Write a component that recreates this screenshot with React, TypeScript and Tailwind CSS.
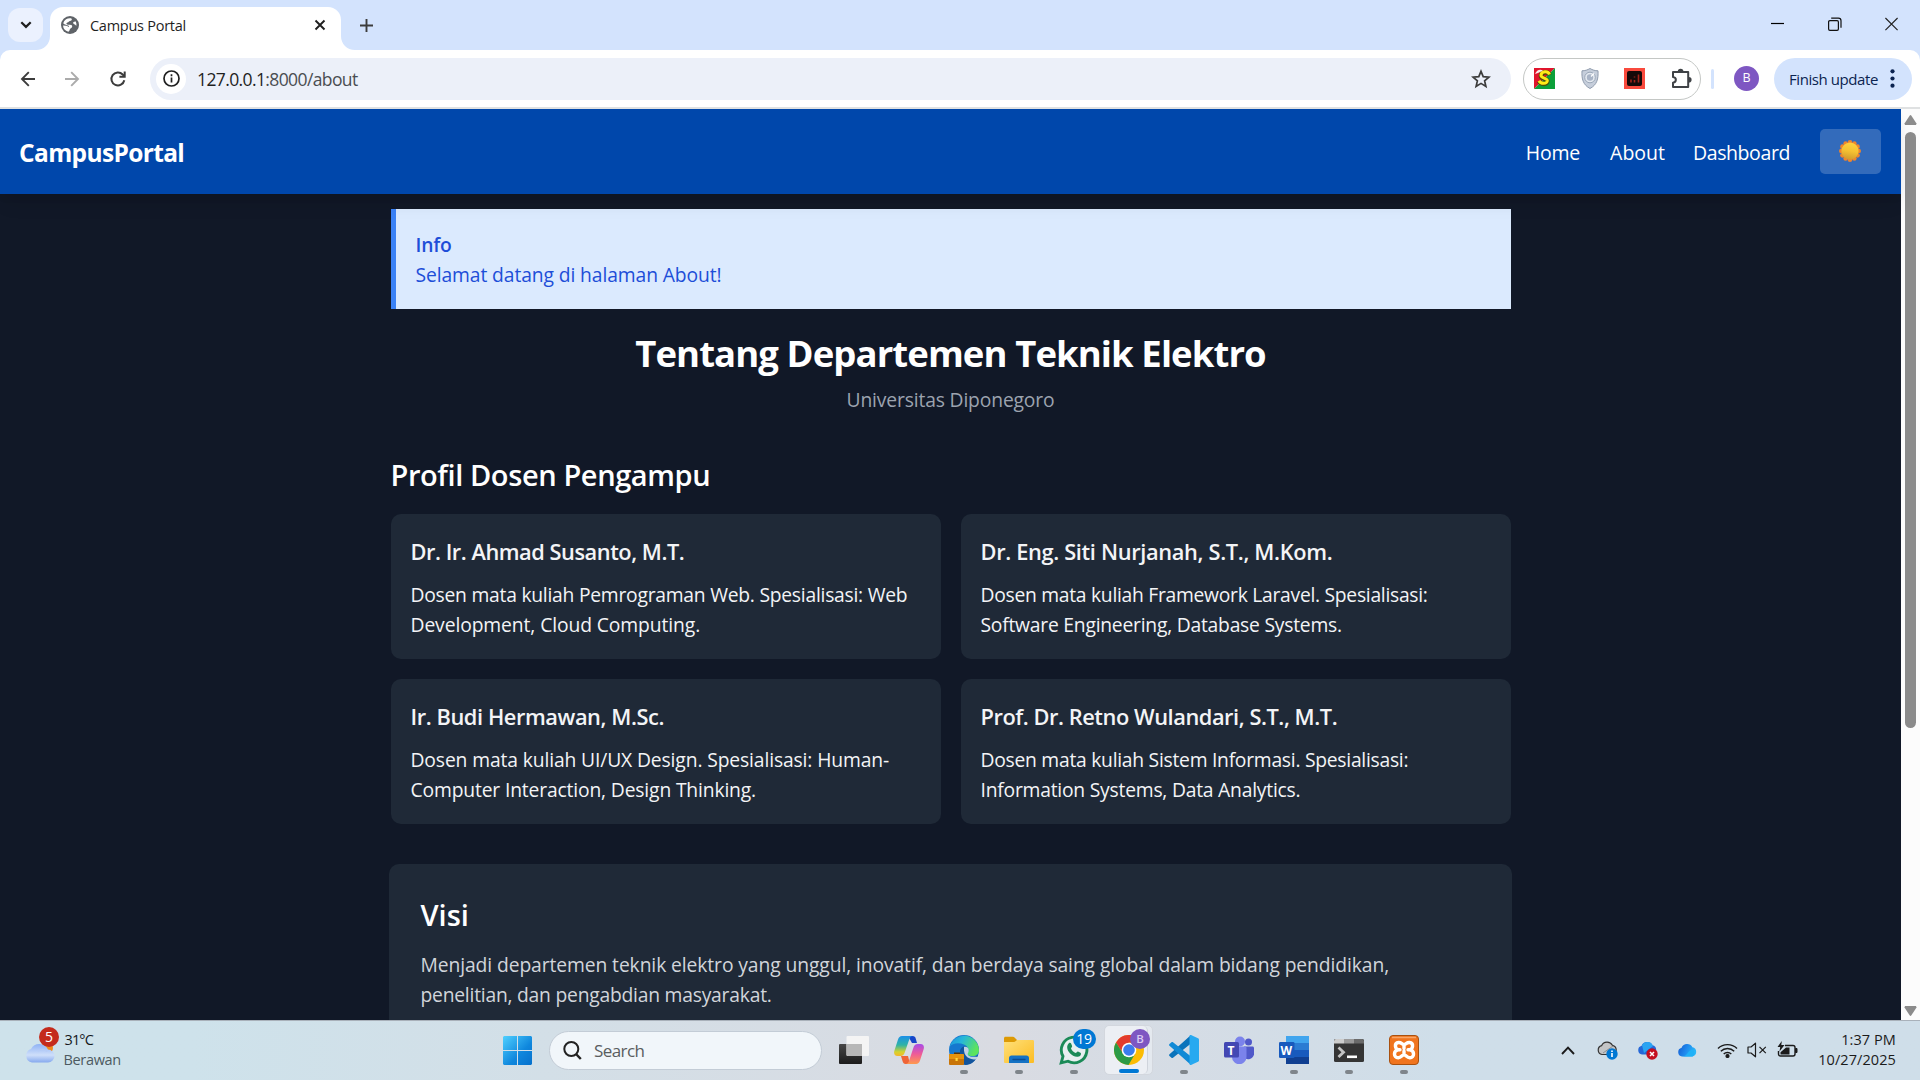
import type { ReactNode } from "react";

const lecturers = [
  { name: "Dr. Ir. Ahmad Susanto, M.T.", nameTrack: "tracking-[-0.0215em]", first: "Dosen mata kuliah Pemrograman Web. Spesialisasi: Web", firstTrack: "tracking-[-0.0128em]", second: "Development, Cloud Computing.", secondTrack: "tracking-[-0.005em]" },
  { name: "Dr. Eng. Siti Nurjanah, S.T., M.Kom.", nameTrack: "tracking-[-0.0155em]", first: "Dosen mata kuliah Framework Laravel. Spesialisasi:", firstTrack: "tracking-[-0.0145em]", second: "Software Engineering, Database Systems.", secondTrack: "tracking-[-0.012em]" },
  { name: "Ir. Budi Hermawan, M.Sc.", nameTrack: "tracking-[-0.0195em]", first: "Dosen mata kuliah UI/UX Design. Spesialisasi: Human-", firstTrack: "tracking-[-0.0066em]", second: "Computer Interaction, Design Thinking.", secondTrack: "tracking-[-0.008em]" },
  { name: "Prof. Dr. Retno Wulandari, S.T., M.T.", nameTrack: "tracking-[-0.0203em]", first: "Dosen mata kuliah Sistem Informasi. Spesialisasi:", firstTrack: "tracking-[-0.0136em]", second: "Information Systems, Data Analytics.", secondTrack: "tracking-[-0.0115em]" },
];

function TabStrip() {
  return (
    <div className="flex h-[50px] bg-[#d3e3fd]">
      <div className="ml-2 mt-2 flex h-[34px] w-[35px] items-center justify-center rounded-[12px] bg-[#ebf1fe]">
        <svg width="12" height="8" viewBox="0 0 12 8" fill="none" stroke="#1f1f1f" strokeWidth="2.2"><path d="M1.3 1.2 6 5.9l4.7-4.7" /></svg>
      </div>
      <svg className="ml-[-7px] self-end" width="14" height="14" viewBox="0 0 14 14"><path d="M14 0v14H0C8 14 14 8 14 0Z" fill="#fff" /></svg>
      <div className="mt-[7px] flex h-[43px] w-[291px] items-center rounded-t-[13px] bg-white pb-[7px] pl-[11px] pr-[15px]">
        <svg width="18" height="18" viewBox="0 0 18 18">
          <circle cx="9" cy="9" r="9" fill="#5f6368" />
          <path d="M9.8 2.200c1.900.9.9 2.600-.7 2.700-1.600.1-1.200 1.500-2.700 1.700-1.500.2-1.300 2 .4 2.100 2 .1 4.600-.2 4.400 1.700-.2 1.700-1.600 1.600-2.300 2.800-.5.9-.4 2.100-1.600 2.600A7 7 0 0 1 2 9.600l3.200.2c1.300.1 1.500 1 2.800 1.200l-.3-1.300-4.300-1.400-1.200-1A7 7 0 0 1 9.800 2.200Z" fill="#fff" />
          <path d="M14.800 5.600c-1.600-.3-3.200.7-2.500 2 .6 1 2.300.7 2.900 2.300a7 7 0 0 0-.4-4.300Z" fill="#fff" />
        </svg>
        <span className="ml-[11px] mt-[2px] text-[14.5px] tracking-[-0.018em] text-[#1f1f1f]">Campus Portal</span>
        <svg className="ml-auto" width="12" height="12" viewBox="0 0 12 12" stroke="#1f1f1f" strokeWidth="1.9"><path d="m1.500 1.500 9 9m0-9-9 9" /></svg>
      </div>
      <svg className="self-end" width="14" height="14" viewBox="0 0 14 14"><path d="M0 0v14h14C6 14 0 8 0 0Z" fill="#fff" /></svg>
      <svg className="ml-[5px] mt-[18.5px]" width="13" height="13" viewBox="0 0 13 13" stroke="#3c3c3c" strokeWidth="1.9"><path d="M6.500 0v13M0 6.500h13" /></svg>
      <div className="ml-auto mr-[22px] mt-[17px] flex h-[14px] gap-[43.5px]">
        <svg width="13" height="14" viewBox="0 0 13 14" stroke="#000" strokeWidth="1.2"><path d="M0 6.500h13" /></svg>
        <svg width="14" height="14" viewBox="0 0 14 14" fill="none" stroke="#111" strokeWidth="1.2"><rect x=".6" y="3.600" width="9.800" height="9.800" rx="1.300" /><path d="M3.200 1.200h7.200a2.600 2.600 0 0 1 2.600 2.600v7" /></svg>
        <svg width="13" height="14" viewBox="0 0 13 14" stroke="#222" strokeWidth="1.2"><path d="m.400 1 12.200 12.200m0-12.200L.400 13.200" /></svg>
      </div>
    </div>
  );
}

function Toolbar() {
  return (
    <div className="h-[59px] bg-[#d3e3fd]">
      <div className="flex h-[59px] items-center rounded-t-[10px] border-b-2 border-[#dfe1e2] bg-white">
        <svg className="ml-[20px]" width="16" height="16" viewBox="0 0 16 16" fill="none" stroke="#3c3c3c" strokeWidth="1.9"><path d="M15 8H2m6.800-6.800L2 8l6.800 6.800" /></svg>
        <svg className="ml-[28px]" width="16" height="16" viewBox="0 0 16 16" fill="none" stroke="#ababab" strokeWidth="1.9"><path d="M1 8h13M7.200 1.200 14 8l-6.800 6.800" /></svg>
        <svg className="ml-[28.500px]" width="18" height="18" viewBox="0 0 18 18" fill="none" stroke="#3c3c3c" strokeWidth="2"><path d="M15.300 10.300A6.500 6.500 0 1 1 13.700 4.500l1.600 1.700" /><path d="M15.700 1.500v5.300h-5.300" /></svg>
        <div className="ml-[23.500px] flex h-[42px] w-[1361px] items-center rounded-full bg-[#ecf0f9] pl-[6px] pr-[20px]">
          <div className="flex size-[30px] items-center justify-center rounded-full bg-white">
            <svg width="17" height="17" viewBox="0 0 17 17" fill="none" stroke="#1f1f1f" strokeWidth="1.7"><circle cx="8.500" cy="8.500" r="7.500" /><path d="M8.500 7.500v5M8.500 4.300v1.900" /></svg>
          </div>
          <span className="ml-[11px] mt-[2px] text-[17.5px] tracking-[-0.035em] text-[#4a4d51]"><span className="text-[#1f1f1f]">127.0.0.1</span>:8000/about</span>
          <svg className="ml-auto" width="20" height="20" viewBox="0 0 20 20" fill="none" stroke="#3c3c3c" strokeWidth="1.7"><path d="m10 2.300 2.200 5.300 5.700.500-4.300 3.700 1.300 5.600-4.900-3-4.900 3 1.300-5.600-4.300-3.700 5.700-.500Z" /></svg>
        </div>
        <div className="ml-[12px] flex h-[42px] w-[178px] items-center rounded-full border border-[#c4c7c5] pl-[10px]">
          <svg width="21" height="21" viewBox="0 0 21 21"><path d="M0 0h21L0 21Z" fill="#e0142c" /><path d="M21 0v21H0Z" fill="#0ca03a" /><path d="M15.500 7C14 2.800 7.500 4 7 7.500c-.5 3.500 7 2.600 6.300 6-.8 3.300-6.500 3-8.300-.3" fill="none" stroke="#4b4d08" strokeWidth="4.600" /><path d="M15.500 6.500C14 2.300 7.500 3.500 7 7c-.5 3.500 7 2.600 6.300 6-.8 3.300-6.500 3-8.300-.3" fill="none" stroke="#ffeb16" strokeWidth="3" /><path d="M1 6C2.500 2 6 .8 9 2.500L4 5Z" fill="#f9e9e9" /></svg>
          <svg className="ml-[26px]" width="18" height="21" viewBox="0 0 18 21"><path d="M9 .500c2.500 1.500 5 2.300 8 2.300.500 8-1 14-8 17.700C2 16.800.500 10.800 1 2.800c3 0 5.500-.800 8-2.300Z" fill="#c6cedb" stroke="#8f9bad" /><circle cx="9" cy="9.500" r="5.300" fill="#e5eaf1" stroke="#9ba7b8" /><circle cx="9" cy="9.500" r="3.200" fill="#a9b4c6" /><path d="m10 8.500 3-3" stroke="#fff" strokeWidth="1.200" /></svg>
          <svg className="ml-[25px]" width="21" height="21" viewBox="0 0 21 21"><path d="M0 0h21v21H0z" fill="#f94a3d" /><rect x="3" y="3" width="15" height="15" rx="2" fill="#150909" /><path d="M7 14.500v-3m3.500 3V12m0-2.500v-1m4 6v-8" stroke="#a3231b" strokeWidth="1.600" /></svg>
          <svg className="ml-[25.500px]" width="21" height="21" viewBox="0 0 21 21" fill="none" stroke="#3f4246" strokeWidth="2"><path d="M2 4h15.200v15H2v-4.300c3.800-.500 3.800-5.300 0-5.800Z" strokeLinejoin="round" /><path d="M6.800 3.600a2.800 2.800 0 0 1 5.600 0ZM17.800 8.900a2.800 2.800 0 0 1 0 5.600Z" fill="#3f4246" stroke="none" /></svg>
        </div>
        <div className="ml-[10px] h-[20px] w-[3px] rounded-full bg-[#d3e3fd]" />
        <div className="ml-[20px] flex size-[25px] items-center justify-center rounded-full bg-[#7e57c2] text-[12.5px] font-medium text-white">B</div>
        <div className="ml-[15px] flex h-[42px] w-[138px] items-center rounded-full bg-[#d3e3fd] pl-[15px]">
          <span className="mt-px w-[91px] whitespace-nowrap text-[15px] tracking-[-0.028em] text-[#0b2350]">Finish update</span>
          <svg className="ml-[10px]" width="5" height="19" viewBox="0 0 5 19" fill="#0b2350"><circle cx="2.500" cy="2.300" r="2.100" /><circle cx="2.500" cy="9.500" r="2.100" /><circle cx="2.500" cy="16.700" r="2.100" /></svg>
        </div>
      </div>
    </div>
  );
}

function SunIcon() {
  const petals = Array.from({ length: 12 }, (_, i) => (i * Math.PI) / 6);
  return (
    <svg width="24" height="24" viewBox="0 0 24 24">
      <defs><linearGradient id="sun" x1="0.6" y1="0" x2="0.4" y2="1"><stop stopColor="#ffd33f" /><stop offset=".5" stopColor="#f5c132" /><stop offset="1" stopColor="#d09a2e" /></linearGradient></defs>
      {petals.map((a) => <circle key={a} cx={12 + 8.7 * Math.cos(a)} cy={12 + 8.7 * Math.sin(a)} r="2.3" fill="#f0852c" />)}
      <circle cx="12" cy="12" r="8.600" fill="url(#sun)" />
    </svg>
  );
}

function Page() {
  return (
    <div className="flex h-[911px] overflow-hidden bg-[#111827]">
      <div className="min-w-0 flex-1">
        <nav className="relative flex h-[85px] items-center justify-between bg-[#0047ab] px-5 text-white shadow-[0_5px_8px_-1px_rgba(0,0,0,0.04),0_12px_18px_-4px_rgba(0,0,0,0.1)]">
          <span className="ml-[-1px] mt-[3px] text-[24.5px] font-bold tracking-[-0.026em]">CampusPortal</span>
          <div className="flex items-center text-[19.5px] font-medium">
            <span className="mt-[2px] tracking-[-0.01em]">Home</span>
            <span className="ml-[30px] mt-[2px]">About</span>
            <span className="ml-[28px] mt-[2px] tracking-[-0.0205em]">Dashboard</span>
            <div className="ml-[30px] flex h-[45px] w-[61px] items-center justify-center rounded-[5px] bg-white/20 pr-[1px] pb-px"><SunIcon /></div>
          </div>
        </nav>
        <main className="mx-auto w-[1120px] pt-[15px]">
          <div className="h-[100px] border-l-5 border-[#3b82f6] bg-[#dbeafe] px-5 pt-[21px] text-[19.3px] leading-[30px] text-[#1d4ed8]">
            <p className="font-semibold tracking-[-0.01em]">Info</p>
            <p className="tracking-[-0.0055em]">Selamat datang di halaman About!</p>
          </div>
          <h1 className="mt-[21.5px] text-center text-[36.5px] font-bold leading-[45px] tracking-[-0.025em] text-white">Tentang Departemen Teknik Elektro</h1>
          <p className="mt-[9.5px] text-center text-[19.3px] leading-[30px] tracking-[-0.008em] text-[#9ca3af]">Universitas Diponegoro</p>
          <h2 className="mt-[40px] text-[29px] font-semibold leading-[40px] tracking-[-0.0135em] text-white">Profil Dosen Pengampu</h2>
          <div className="mt-[19px] grid grid-cols-2 gap-5">
            {lecturers.map((l) => (
              <div key={l.name} className="h-[145px] whitespace-nowrap rounded-[10px] bg-[#1f2937] p-5 text-[#f3f4f6]">
                <h3 className={`text-[21.8px] font-semibold leading-[35px] ${l.nameTrack}`}>{l.name}</h3>
                <p className="mt-[11px] text-[19.3px] leading-[30px]">
                  <span className={l.firstTrack}>{l.first}</span><br />
                  <span className={l.secondTrack}>{l.second}</span>
                </p>
              </div>
            ))}
          </div>
          <section className="mx-[-1.5px] mt-[39.5px] h-[200px] rounded-[10px] bg-[#1f2937] pl-[31.5px] pt-[31.5px]">
            <h2 className="text-[29px] font-semibold leading-[40px] text-white">Visi</h2>
            <p className="mt-[15px] whitespace-nowrap text-[19.3px] leading-[30px] text-[#d1d5db]">
              <span className="tracking-[-0.0051em]">Menjadi departemen teknik elektro yang unggul, inovatif, dan berdaya saing global dalam bidang pendidikan,</span><br />
              <span className="tracking-[-0.0118em]">penelitian, dan pengabdian masyarakat.</span>
            </p>
          </section>
        </main>
      </div>
      <div className="flex w-[19px] flex-col items-center bg-[#fcfcfc] pb-[4px] pt-[6px]">
        <svg width="13" height="10" viewBox="0 0 13 10" fill="#8b8b8b"><path d="M5.600.700a1.100 1.100 0 0 1 1.800 0L12.500 8.600 12 10H1L.500 8.600Z" /></svg>
        <div className="mt-[7px] h-[596px] w-[11px] rounded-full bg-[#8b8b8b]" />
        <svg className="mt-auto" width="13" height="10" viewBox="0 0 13 10" fill="#8b8b8b"><path d="M5.600 9.300a1.100 1.100 0 0 0 1.800 0L12.500 1.400 12 0H1L.500 1.400Z" /></svg>
      </div>
    </div>
  );
}

function Slot({ children, mark }: { children: ReactNode; mark?: boolean }) {
  return (
    <div className="flex w-[55px] flex-col items-center pt-[14px]">
      <div className="relative flex size-[30px] items-center justify-center">{children}</div>
      {mark && <div className="mt-[5px] h-1 w-2 rounded-full bg-[#7f858b]" />}
    </div>
  );
}

const cloudPath = "M5 13.500A4.500 4.500 0 0 1 4.600 4.700 6 6 0 0 1 15.400 4.300 4.700 4.700 0 0 1 15.500 13.500Z";

function Taskbar() {
  return (
    <div className="flex h-[60px] border-t border-[#a9b1ba] bg-linear-to-r from-[#cee2eb] via-[#d9dbe2] to-[#cfdee9] from-10% via-52% to-75%">
      <div className="flex w-[503px] pl-[24px] pt-[6px]">
        <div className="relative h-[40px] w-[38px]">
          <svg className="mt-[15px]" width="32" height="22" viewBox="0 0 32 22"><defs><linearGradient id="wc" x2="0" y2="1"><stop stopColor="#8fb2f5" /><stop offset=".6" stopColor="#cfdffa" /><stop offset="1" stopColor="#86a9ee" /></linearGradient></defs><circle cx="23" cy="6" r="6" fill="#f28a1b" /><path d="M8 20.500a7 7 0 0 1-1-13.500A9.500 9.500 0 0 1 24 7.500a6.500 6.500 0 0 1 0 13Z" fill="url(#wc)" /><path d="M14 9c3-2 7-2 9 1" fill="none" stroke="#b8ccf6" /></svg>
          <div className="absolute left-[15px] top-0 flex size-[20px] items-center justify-center rounded-full bg-[#c42b1c] text-[14px] leading-none text-white">5</div>
        </div>
        <div className="ml-[1.5px] pt-[3px] text-[14.5px] leading-[20px]">
          <p className="ml-px tracking-[-0.06em] text-[#16191c]">31°C</p>
          <p className="tracking-[-0.023em] text-[#4d5a61]">Berawan</p>
        </div>
      </div>
      <svg className="mt-[15px]" width="29" height="29" viewBox="0 0 29 29"><defs><linearGradient id="win" x2="1" y2="1"><stop stopColor="#4fd0ff" /><stop offset=".6" stopColor="#0f87dd" /><stop offset="1" stopColor="#0670cc" /></linearGradient></defs><path d="M1 0h13v14H0V1zM15 0h13l1 1v13H15zM0 15h14v14H1l-1-1zM15 15h14v13l-1 1H15z" fill="url(#win)" /></svg>
      <div className="ml-[17px] mt-[9.500px] flex h-[39px] w-[273px] items-center rounded-full border border-[#c3ccd6] bg-[#f1f6fa] pl-[13px]">
        <svg width="19" height="19" viewBox="0 0 19 19" fill="none" stroke="#222" strokeWidth="2"><circle cx="8.300" cy="8" r="7" /><path d="m13 13 4.800 5" strokeWidth="2.500" /></svg>
        <span className="ml-[12px] mt-px text-[17px] tracking-[-0.034em] text-[#5a5d60]">Search</span>
      </div>
      <div className="ml-[4px] flex">
        <Slot><svg width="30" height="28" viewBox="0 0 30 28"><defs><linearGradient id="tv" x2="0" y2="1"><stop stopColor="#474747" /><stop offset="1" stopColor="#1b1b1b" /></linearGradient></defs><rect y="8" width="23" height="20" rx="1" fill="url(#tv)" /><rect x="7.500" width="22.500" height="20" rx="1" fill="#f4f4f4" /><path d="M7.500 8H23v12H8.500l-1-1Z" fill="#b7b7b7" /></svg></Slot>
        <Slot>
          <svg width="30" height="28" viewBox="0 0 30 28"><defs><linearGradient id="cpa" x2="0" y2="1"><stop stopColor="#1b8fe8" /><stop offset=".45" stopColor="#2fb3a6" /><stop offset=".8" stopColor="#d7d22d" /><stop offset="1" stopColor="#f5b62a" /></linearGradient><linearGradient id="cpb" x2="0" y2="1"><stop stopColor="#a84be8" /><stop offset=".5" stopColor="#ee5b98" /><stop offset="1" stopColor="#ff9a4d" /></linearGradient></defs>
            <path d="M14 0h4.500c2 0 2.800 1 3.300 2.700L23 7h-5Z" fill="#1746c9" /><path d="M8 0h11c-2 0-3 1.200-3.600 3l-4.500 13c-.8 2.500-2 4-4.500 4H3.500C.500 20-.400 17.500.300 15L4 3.500C4.700 1.200 6 0 8 0Z" fill="url(#cpa)" /><path d="M7 20h7l2 8h-4.500c-1.500 0-2.500-1-3-3Z" fill="#ef6437" /><path d="M22 28H11.500c2 0 2.800-1.200 3.500-3l4.300-13c.8-2.500 2-4 4.500-4h2.700c3 0 3.900 2.500 3.200 5L26 24.500C25.300 26.800 24 28 22 28Z" fill="url(#cpb)" /></svg>
        </Slot>
        <Slot mark>
          <svg width="30" height="30" viewBox="0 0 30 30"><defs><linearGradient id="ed" x2="1" y2=".4"><stop stopColor="#1d8fe0" /><stop offset=".45" stopColor="#27b7d8" /><stop offset="1" stopColor="#5ce45d" /></linearGradient></defs>
            <circle cx="15" cy="15" r="15" fill="#1678cf" /><path d="M.5 12A15 15 0 0 1 30 15c0 4-3 6-6 6-4 0-7-1-5-4 1.200-2 0-6-4-7.500C10 7.500 3 8 .5 12Z" fill="url(#ed)" /><path d="M11 17c0-4 3-6 5.500-5.500C20 12.500 20 16 18.500 18c-1 2 1 4 4 4 3 0 5-.7 6.500-2C27 26 22 30 16.500 30 12 28 11 22 11 17Z" fill="#12549d" /><path d="M15 12c4-1 6 3 4 6-1 2 1 3.500 4 3.800h6l-2 2.700c-6 0-13-2-12-12.500Z" fill="#dfe7ef" opacity=".85" />
            <path d="M5 19.500h6v-2H5z" fill="#5a3508" /><rect y="19" width="15" height="11" rx="1" fill="#c87408" /><path d="M0 20.500c0-1 .5-1.500 1.500-1.500h12c1 0 1.500.5 1.500 1.500V24H0Z" fill="#e5930e" /><rect x="6.500" y="23" width="2.200" height="3" fill="#ffd63b" /></svg>
        </Slot>
        <Slot mark>
          <svg width="30" height="28" viewBox="0 0 30 28"><defs><linearGradient id="fo" x2="1" y2="1"><stop stopColor="#ffe07a" /><stop offset="1" stopColor="#fcbc22" /></linearGradient></defs><path d="M0 2.200C0 1.300.600.700 1.500.700H9c.7 0 1 .2 1.500.7L13 4v6H0Z" fill="#dd9a05" /><path d="M0 6h9.500c1 0 1.500-.400 2-.800L13 4h15.500c1 0 1.500.500 1.500 1.500v20c0 1-.500 1.500-1.500 1.500h-27C.500 27 0 26.500 0 25.500Z" fill="url(#fo)" /><path d="M5 27v-5c0-1.500 1-2.500 2.500-2.500h15c1.500 0 2.500 1 2.500 2.500v5Z" fill="#1572c4" /><path d="M9 23.500h12" stroke="#0a4c93" strokeWidth="1.300" strokeLinecap="round" /></svg>
        </Slot>
        <Slot mark>
          <svg width="30" height="30" viewBox="0 0 30 30"><path d="M2.200 27.800 4 21.300A12.800 12.800 0 1 1 9 26.200Z" fill="#e6eff0" stroke="#1a8a57" strokeWidth="2.900" /><path d="M9.800 8.300c.7-.7 1.900-.6 2.300.3l1 2.300c.3.700-.9 1.800-1.100 2.500.9 2 2.500 3.500 4.700 4.500.7-.2 1.600-1.700 2.300-1.400l2.500 1.200c.8.400.6 1.900-.1 2.700-3.200 3.100-8 .4-10.500-2.200S6.800 11.300 9.800 8.300Z" fill="#1a8a57" /></svg>
          <div className="absolute left-[14px] top-[-6px] flex h-[20px] w-[23px] items-center justify-center rounded-full bg-[#0078d4] text-[14px] leading-none tracking-tight text-white">19</div>
        </Slot>
        <div className="relative flex w-[55px] justify-center">
          <div className="mt-[4px] flex h-[50px] w-[49px] rounded-[5px] border border-[#d3d7de] bg-[#e4e9ef]">
            <div className="flex h-[48px] w-[43px] flex-col items-center rounded-[5px] border-r border-[#cfd4dc] bg-[#eceff4] pl-[5px] pt-[9px]">
              <svg className="shrink-0" width="30" height="30" viewBox="0 0 30 30"><circle cx="15" cy="15" r="15" fill="#fbbc04" /><path d="M2 7.500A15 15 0 0 1 28 7.500H15L9 18.500Z" fill="#e33b2e" /><path d="M2 7.500A15 15 0 0 0 14.500 30L21 19l-12-.5Z" fill="#2b9a46" /><circle cx="15" cy="15" r="7.300" fill="#fff" /><circle cx="15" cy="15" r="5.800" fill="#3b7ded" /></svg>
              <div className="mt-[4px] h-1 w-[20px] shrink-0 rounded-full bg-[#0078d4]" />
            </div>
          </div>
          <div className="absolute left-[29px] top-[8px] flex size-[20px] items-center justify-center rounded-full bg-[#7e57c2] text-[11.5px] font-semibold leading-none text-[#d9c9f2]">B</div>
        </div>
        <Slot mark>
          <svg width="30" height="30" viewBox="0 0 30 30"><path d="M22 0v8.500L4 22.800c-.500.400-1 .400-1.500 0L.500 21c-.600-.500-.600-1.300 0-1.800Z" fill="#0a73bb" /><path d="M22 30v-8.500L4 7.200c-.500-.400-1-.400-1.500 0L.500 9c-.600.500-.600 1.300 0 1.800Z" fill="#118ad6" /><path d="m22 0 7 3.200c.600.300 1 .800 1 1.500v20.600c0 .700-.400 1.200-1 1.500L22 30c-.800.300-1.500-.300-1.500-1V1c0-.800.700-1.300 1.500-1Z" fill="#27a9f0" /></svg>
        </Slot>
        <Slot>
          <svg width="30" height="28" viewBox="0 0 30 28"><circle cx="24.500" cy="6" r="3.500" fill="#5059c9" /><path d="M20 10.500h8.500c.8 0 1.500.7 1.500 1.500v6.500a6 6 0 0 1-10 3Z" fill="#5059c9" /><circle cx="16" cy="5.500" r="5" fill="#7b83eb" /><path d="M8 10.500h13c.8 0 1.500.7 1.500 1.500v9a7 7 0 0 1-14.500 0Z" fill="#7b83eb" /><rect y="6" width="15" height="15.500" rx="1.500" fill="#4348b3" /></svg>
          <span className="absolute left-[4px] top-[7.5px] text-[12px] font-bold leading-[15px] text-white">T</span>
        </Slot>
        <Slot mark>
          <svg width="30" height="28" viewBox="0 0 30 28"><path d="M7 0h23v7H7z" fill="#41a5ee" /><path d="M7 7h23v7H7z" fill="#2b7cd3" /><path d="M7 14h23v7H7z" fill="#185abd" /><path d="M7 21h23v7H7z" fill="#103f91" /><rect y="6" width="15.500" height="16" rx="1.300" fill="#185abd" /></svg>
          <span className="absolute left-[2px] top-[7.5px] text-[12px] font-bold leading-[15px] text-white">W</span>
        </Slot>
        <Slot mark>
          <svg width="30" height="23" viewBox="0 0 30 23"><rect width="30" height="23" rx="1.500" fill="#353535" /><path d="M1.500 0H10v4.500H0v-3Z" fill="#cdcdcd" /><path d="M10 0h10v4.500H10z" fill="#9a9a9a" /><path d="M20 0h8.500L30 1.500v3H20z" fill="#6a6a6a" /><path d="m4.500 8.500 5 4.700-5 4.800" fill="none" stroke="#c4c4c4" strokeWidth="2.800" /><path d="M13 17.800h10" stroke="#fff" strokeWidth="2.600" /></svg>
        </Slot>
        <Slot mark>
          <svg width="30" height="30" viewBox="0 0 30 30"><rect x=".5" y=".5" width="29" height="29" rx="3.500" fill="#f0741e" stroke="#a8500f" /><path d="M3 2.500h24" stroke="#f8a566" strokeWidth="1.500" /><path d="M11 14.800H9.500C6 14.500 4.800 8 9.500 7.500c3-.3 3.500 2 5.500 2s2.500-2.300 5.500-2c4.700.5 3.500 7 0 7.300H19M9.500 14.800C4 15 4.300 23 9.300 22.800c3-.1 3.700-3 5.700-3s2.700 2.900 5.700 3c5 .2 5.300-7.800-.2-8M15 10v3.500M15 19.500v-3.500" fill="none" stroke="#fff" strokeWidth="3.400" strokeLinecap="round" strokeLinejoin="round" /></svg>
        </Slot>
      </div>
      <div className="ml-auto flex h-[58px] items-center">
        <svg className="mr-[22px]" width="14" height="9" viewBox="0 0 14 9" fill="none" stroke="#1b1b1b" strokeWidth="1.9"><path d="m1 8 6-6.300L13 8" /></svg>
        <svg width="21" height="19" viewBox="0 0 21 19"><path d={cloudPath} fill="#c4c5c6" stroke="#333" strokeWidth="1.200" /><path d="m6 12 10-7" stroke="#8f9092" /><circle cx="15" cy="13" r="5.700" fill="#0078d4" /><path d="M15 12v4m0-6.500v1.500" stroke="#fff" strokeWidth="1.600" /></svg>
        <svg className="ml-[19px]" width="21" height="19" viewBox="0 0 21 19"><path d={cloudPath} fill="#2568d8" /><path d="M5 4.300A6 6 0 0 1 16 5L7 12Z" fill="#2ba4f2" /><circle cx="15" cy="13" r="5.700" fill="#c50f1f" /><path d="m13 11 4 4m0-4-4 4" stroke="#fff" strokeWidth="1.500" /></svg>
        <svg className="ml-[19px]" width="21" height="15" viewBox="0 0 21 15"><defs><linearGradient id="od" x2="1" y2=".3"><stop stopColor="#155bd0" /><stop offset=".5" stopColor="#1e86ec" /><stop offset="1" stopColor="#29b6f8" /></linearGradient></defs><path d={cloudPath} fill="url(#od)" /><path d="M5 13.500c4 0 5-3 7-5 1.500-1.700 3-2 4-1.500a4 4 0 0 1-.5 6.500Z" fill="#20b1f7" /></svg>
        <svg className="ml-[19px]" width="21" height="15" viewBox="0 0 21 15" fill="none" stroke="#1b1b1b" strokeWidth="1.400"><path d="M1 5.500a13.500 13.500 0 0 1 19 0M3.800 8.300a9.500 9.500 0 0 1 13.400 0M6.700 11a5.500 5.500 0 0 1 7.600 0" /><circle cx="10.500" cy="13" r="1.400" fill="#1b1b1b" /></svg>
        <svg className="ml-[9px]" width="20" height="16" viewBox="0 0 20 16" fill="none" stroke="#1b1b1b" strokeWidth="1.200"><path d="M1 5h3L8.500 1.200v13.600L4 11H1Z" strokeLinejoin="round" /><path d="m12.500 4.800 6.300 6.400m0-6.400-6.300 6.400" /></svg>
        <svg className="ml-[10px]" width="21" height="18" viewBox="0 0 21 18"><path d="M8 4.500h8a2 2 0 0 1 2 2v6.500a2 2 0 0 1-2 2H3.500a2 2 0 0 1-2-2V10" fill="none" stroke="#1b1b1b" strokeWidth="1.400" /><path d="M9 6.500h3.500v7H3.500v-2.300Z" fill="#1b1b1b" /><path d="M18.500 7.500h1.500v4h-1.500z" fill="#1b1b1b" stroke="#1b1b1b" /><path d="M4.800 0 .500 6h2.700l-.7 4.500L7.500 4H4.300Z" fill="#1b1b1b" /></svg>
        <div className="ml-[19px] mr-[24px] w-[79px] text-right text-[14.5px] leading-[20px] tracking-[0.006em] text-[#1b1b1b]"><p>1:37 PM</p><p>10/27/2025</p></div>
      </div>
    </div>
  );
}

export default function App() {
  return (
    <div className="h-[1080px] w-[1920px] overflow-hidden font-['Open_Sans','Noto_Sans',sans-serif]">
      <TabStrip />
      <Toolbar />
      <Page />
      <Taskbar />
    </div>
  );
}
